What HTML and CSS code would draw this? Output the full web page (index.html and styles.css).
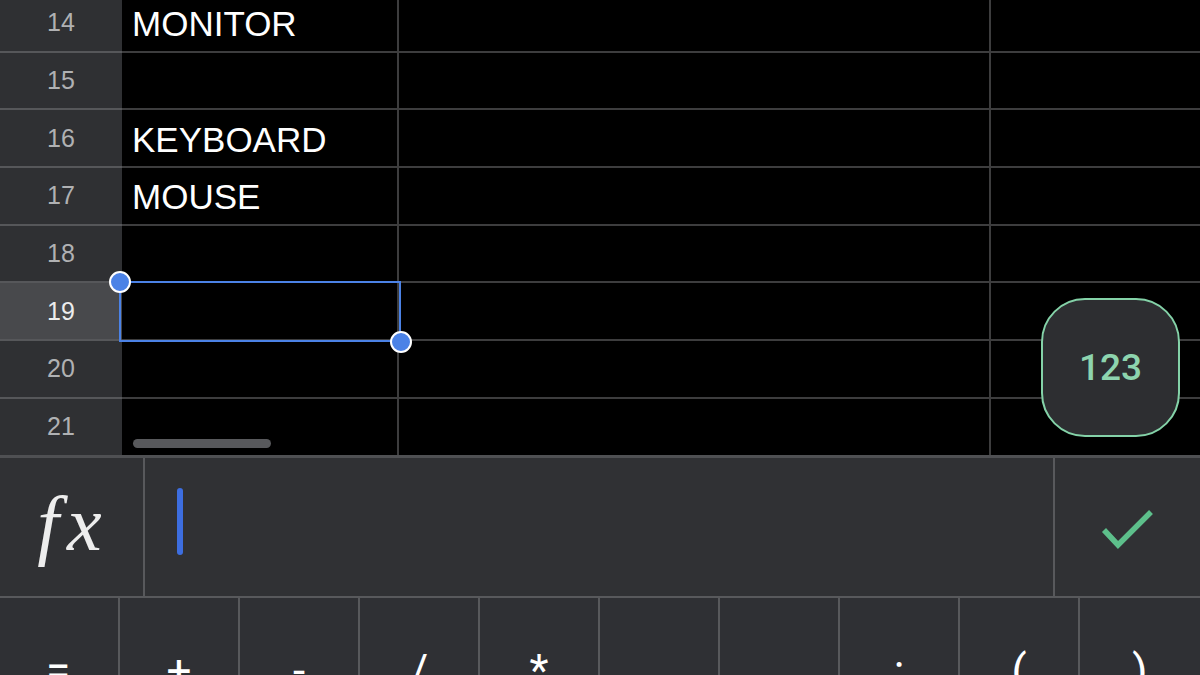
FILE: index.html
```html
<!DOCTYPE html>
<html lang="en">
<head>
    <link rel="stylesheet" href="styles.css">
    <meta charset="UTF-8">
    <meta name="viewport" content="width=device-width, initial-scale=1.0">
    <title>Sheet</title>
</head>
<body>
    <div class="sheet">
        <div class="rows">
            <div class="row"><div class="num">14</div><div class="cell">MONITOR</div><div class="cell"></div><div class="cell"></div></div>
            <div class="row"><div class="num">15</div><div class="cell"></div><div class="cell"></div><div class="cell"></div></div>
            <div class="row"><div class="num">16</div><div class="cell">KEYBOARD</div><div class="cell"></div><div class="cell"></div></div>
            <div class="row"><div class="num">17</div><div class="cell">MOUSE</div><div class="cell"></div><div class="cell"></div></div>
            <div class="row"><div class="num">18</div><div class="cell"></div><div class="cell"></div><div class="cell"></div></div>
            <div class="row"><div class="num active">19</div><div class="cell"></div><div class="cell"></div><div class="cell"></div></div>
            <div class="row"><div class="num">20</div><div class="cell"></div><div class="cell"></div><div class="cell"></div></div>
            <div class="row"><div class="num">21</div><div class="cell"></div><div class="cell"></div><div class="cell"></div></div>
        </div>

        <div class="selection">
            <span class="handle handle-start"></span>
            <span class="handle handle-end"></span>
        </div>
        <div class="scrollbar"></div>
        <div class="num-toggle">123</div>
    </div>

    <div class="formula-bar">
        <div class="fx">fx</div>
        <div class="formula-input"><span class="cursor"></span></div>
        <div class="confirm">
            <svg width="60" height="50" viewBox="0 0 60 50">
                <polyline points="5,21 19,36 52,3" fill="none" stroke="#5dbf8b" stroke-width="5.5"/>
            </svg>
        </div>
    </div>

    <div class="keys">
        <div class="key">=</div>
        <div class="key">+</div>
        <div class="key">-</div>
        <div class="key">/</div>
        <div class="key">*</div>
        <div class="key">,</div>
        <div class="key">.</div>
        <div class="key">:</div>
        <div class="key">(</div>
        <div class="key">)</div>
    </div>
</body>
</html>
```

FILE: styles.css
```css
body {
    margin: 0;
    width: 1200px;
    height: 675px;
    overflow: hidden;
    background-color: #000;
    font-family: "Liberation Sans", Arial, sans-serif;
    display: flex;
    flex-direction: column;
}

.sheet {
    position: relative;
    height: 455px;
    overflow: hidden;
    flex-shrink: 0;
}

.rows {
    margin-top: -5px;
}

.row {
    display: grid;
    grid-template-columns: 122px 277px 592px 1fr;
    height: 57.7px;
}

.num {
    background-color: #2f3033;
    border-bottom: 2px solid #56575a;
    color: #b0b1b3;
    font-size: 25px;
    display: flex;
    align-items: center;
    justify-content: center;
}

.num.active {
    background-color: #48494c;
    color: #ececec;
}

.cell {
    border-bottom: 2px solid #3d3d3e;
    border-right: 2px solid #3d3d3e;
    color: #fff;
    font-size: 35px;
    padding-left: 10px;
    padding-top: 3px;
    display: flex;
    align-items: center;
}

.cell:last-child {
    border-right: none;
}

.selection {
    position: absolute;
    left: 119px;
    top: 281px;
    width: 278px;
    height: 57px;
    border: 2.5px solid #4b82e6;
}

.handle {
    position: absolute;
    width: 18px;
    height: 18px;
    border-radius: 50%;
    background-color: #4b82e6;
    border: 2px solid #fff;
}

.handle-start {
    left: -12px;
    top: -12px;
}

.handle-end {
    right: -13px;
    bottom: -13px;
}

.scrollbar {
    position: absolute;
    left: 133px;
    top: 439px;
    width: 138px;
    height: 9px;
    border-radius: 5px;
    background-color: #58595c;
}

.num-toggle {
    position: absolute;
    left: 1041px;
    top: 298px;
    width: 135px;
    height: 135px;
    border: 2px solid #84d2a8;
    border-radius: 44px;
    background-color: #2d2e31;
    color: #8dd4ae;
    font-family: Roboto, sans-serif;
    font-weight: 500;
    font-size: 37px;
    display: flex;
    align-items: center;
    justify-content: center;
}

.formula-bar {
    display: flex;
    height: 138px;
    background-color: #303134;
    border-top: 3px solid #4f5053;
    flex-shrink: 0;
}

.fx {
    width: 145px;
    border-right: 2px solid #58595c;
    color: #ededed;
    font-family: "Liberation Serif", serif;
    font-style: italic;
    font-size: 78px;
    letter-spacing: 8px;
    display: flex;
    align-items: center;
    justify-content: center;
    padding-bottom: 6px;
    padding-left: 4px;
    box-sizing: border-box;
}

.formula-input {
    flex: 1;
    padding-left: 32px;
    padding-top: 30px;
}

.cursor {
    display: block;
    width: 6px;
    height: 67px;
    border-radius: 3px;
    background-color: #3d6ee0;
}

.confirm {
    width: 147px;
    border-left: 2px solid #58595c;
    display: flex;
    align-items: flex-start;
    justify-content: center;
    padding-top: 51px;
    padding-left: 2px;
    box-sizing: border-box;
}

.keys {
    display: grid;
    grid-template-columns: repeat(10, 120px);
    border-top: 2px solid #58595c;
    background-color: #2f3034;
    flex: 1;
}

.key {
    border-right: 2px solid #58595c;
    color: #fff;
    font-family: Roboto, sans-serif;
    font-size: 44px;
    line-height: 1;
    text-align: center;
    padding-top: 51px;
}

.key:first-child {
    margin-left: -2px;
}

.key:last-child {
    border-right: none;
}
```
